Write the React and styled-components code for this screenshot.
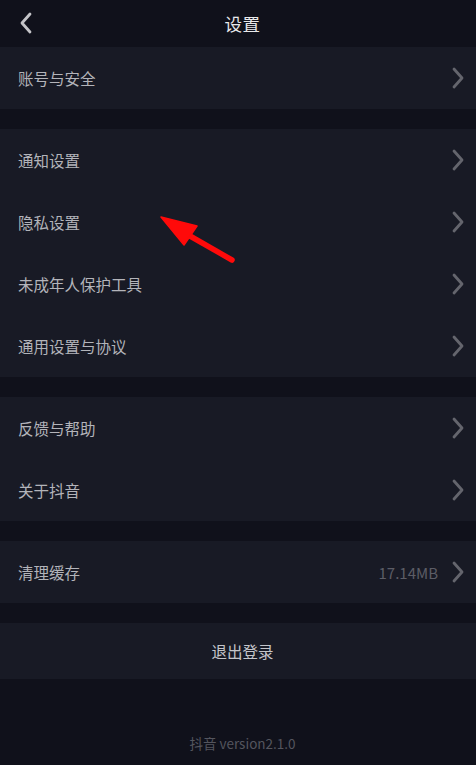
import styled, { createGlobalStyle } from 'styled-components';

const GlobalStyle = createGlobalStyle`
  html, body {
    margin: 0;
    padding: 0;
    background: #10111b;
  }
  body {
    font-family: "Noto Sans CJK SC", "Noto Sans", sans-serif;
    -webkit-font-smoothing: antialiased;
  }
`;

const sections = [
  [{ label: '账号与安全' }],
  [
    { label: '通知设置' },
    { label: '隐私设置' },
    { label: '未成年人保护工具' },
    { label: '通用设置与协议' },
  ],
  [{ label: '反馈与帮助' }, { label: '关于抖音' }],
  [{ label: '清理缓存', value: '17.14MB' }],
];

const Chevron = ({ left, color }) => (
  <svg width="14" height="22" viewBox="0 0 14 22" fill="none">
    <path
      d={left ? 'M11 2 L3 11 L11 20' : 'M3 2 L11 11 L3 20'}
      stroke={color}
      strokeWidth="2.8"
      strokeLinecap="round"
      strokeLinejoin="round"
    />
  </svg>
);

const App = () => {
  return (
    <Page>
      <GlobalStyle />
      <Header>
        <BackButton>
          <Chevron left color="#c4c4c8" />
        </BackButton>
        <Title>设置</Title>
      </Header>

      <Sections>
        {sections.map((items, i) => (
          <Group key={i}>
            {items.map((item) => (
              <Row key={item.label}>
                <Label>{item.label}</Label>
                <Trail>
                  {item.value && <Value>{item.value}</Value>}
                  <Chevron color="#64656d" />
                </Trail>
              </Row>
            ))}
          </Group>
        ))}
        <Logout>退出登录</Logout>
      </Sections>

      <Footer>抖音 version2.1.0</Footer>

      <Arrow width="90" height="60" viewBox="0 0 90 60">
        <path d="M30 20 L72 44" stroke="#ff0a0a" strokeWidth="5.5" strokeLinecap="round" />
        <path d="M1 1 L37 10 L24 29 Z" fill="#ff0a0a" stroke="#ff0a0a" strokeWidth="1.5" strokeLinejoin="round" />
      </Arrow>
    </Page>
  );
};

const Page = styled.div`
  position: relative;
  width: 476px;
  height: 765px;
  background: #10111b;
  display: flex;
  flex-direction: column;
  overflow: hidden;
`;

const Header = styled.header`
  position: relative;
  height: 47px;
  padding-left: 9px;
  display: flex;
  align-items: center;
  justify-content: center;
`;

const BackButton = styled.div`
  position: absolute;
  left: 19px;
  top: 12px;
  display: flex;
`;

const Title = styled.h1`
  margin: 0;
  font-size: 17.5px;
  font-weight: 400;
  color: #e8e8ea;
  letter-spacing: 0.5px;
`;

const Sections = styled.div`
  display: flex;
  flex-direction: column;
  gap: 20px;
`;

const Group = styled.section`
  background: #181a25;
  display: flex;
  flex-direction: column;
`;

const Row = styled.div`
  height: 62px;
  padding: 0 11px 0 18px;
  display: flex;
  align-items: center;
  justify-content: space-between;
`;

const Label = styled.span`
  font-size: 15.5px;
  color: #b3b4ba;
`;

const Trail = styled.div`
  display: flex;
  align-items: center;
  gap: 13px;
`;

const Value = styled.span`
  font-size: 15px;
  color: #5c5d66;
`;

const Logout = styled.div`
  height: 56px;
  padding-left: 9px;
  background: #181a25;
  display: flex;
  align-items: center;
  justify-content: center;
  font-size: 15.5px;
  color: #c4c5ca;
`;

const Footer = styled.div`
  margin-top: auto;
  height: 44px;
  padding-left: 9px;
  display: flex;
  align-items: center;
  justify-content: center;
  font-size: 13.5px;
  color: #54555e;
`;

const Arrow = styled.svg`
  position: absolute;
  left: 160px;
  top: 216px;
`;

export default App;
